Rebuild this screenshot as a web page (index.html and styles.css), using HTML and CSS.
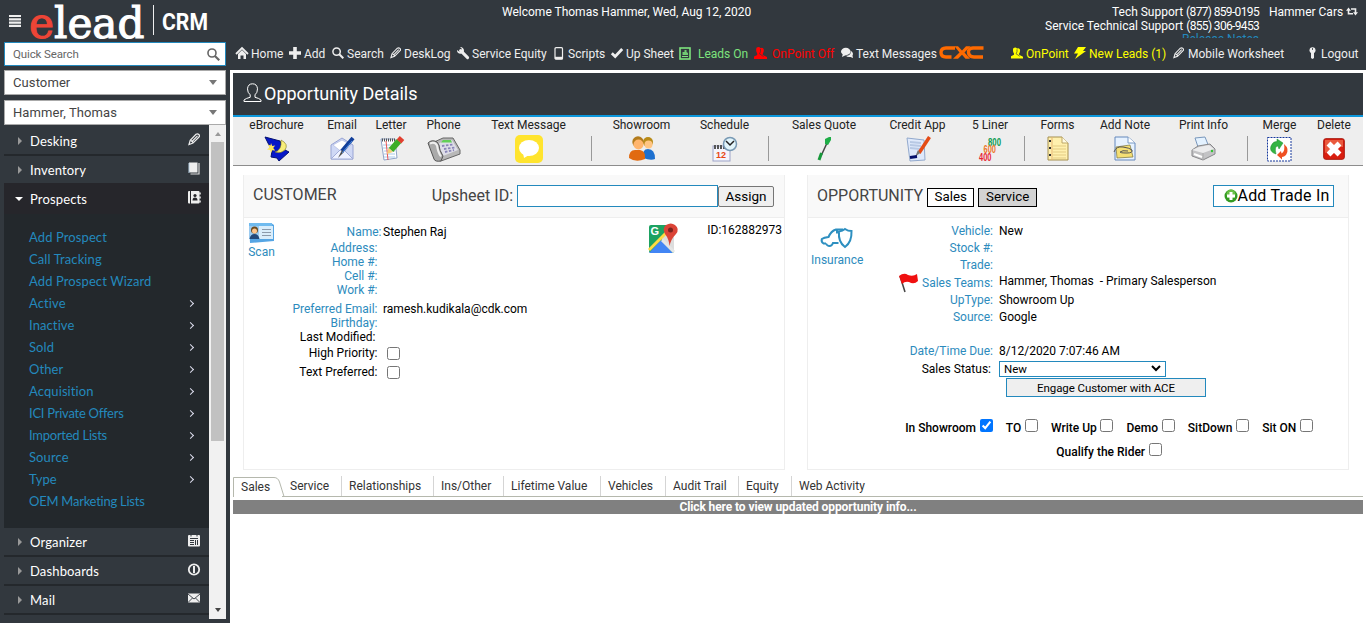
FILE: index.html
```html
<!DOCTYPE html>
<html lang="en">
<head>
<meta charset="utf-8">
<title>elead CRM</title>
<link rel="stylesheet" href="styles.css">
</head>
<body>
<svg class="defs" width="0" height="0">
  <symbol id="pencil" viewBox="0 0 12 12"><path d="M1 11l1.200-4.200L8 .8Q9.600-.2 10.800 1T11 3.500L5 9.600zM3 7l2.200 2M4 8L9.500 2.300" fill="none" stroke="currentColor" stroke-width="1.200"/></symbol>
  <symbol id="search" viewBox="0 0 12 12"><circle cx="4.600" cy="4.600" r="3.700" fill="none" stroke="currentColor" stroke-width="1.500"/><path d="M7.300 7.300l4 4" stroke="currentColor" stroke-width="2"/></symbol>
  <symbol id="users" viewBox="0 0 13 12"><path d="M2.500.8Q5-.8 6.500 1.200Q9 0 9.800 2.500Q10 5 8.800 6.500V8l4.200 2v2H0V9.500l3.200-1.600V6.500Q1.500 4 2.500.8z" fill="currentColor"/><path d="M6.500 2Q7 5 5.500 6.800L9.500 9.500" fill="none" stroke="#32383e" stroke-width=".7"/></symbol>
</svg>

<aside class="sidebar">
  <div class="brand">
    <svg width="222" height="42" viewBox="0 0 222 42">
      <path d="M5 16h12M5 19.300h12M5 22.600h12M5 25.900h12" stroke="#eee" stroke-width="2.200"/>
      <text class="logo" x="25" y="37.500" textLength="115.500" lengthAdjust="spacingAndGlyphs"><tspan class="logo-e">e</tspan>lead</text>
      <path d="M149.500 5v30" stroke="#eee"/>
      <text class="crm" x="158" y="30" textLength="46" lengthAdjust="spacingAndGlyphs">CRM</text>
    </svg>
  </div>
  <div class="field quick"><span>Quick Search</span><svg width="13" height="13"><use href="#search"/></svg></div>
  <div class="field"><span>Customer</span><i class="caret"></i></div>
  <div class="field"><span>Hammer, Thomas</span><i class="caret"></i></div>
  <div class="menu-wrap">
    <nav class="menu">
      <div class="item"><i class="tri"></i><span>Desking</span><svg width="12" height="13"><use href="#pencil"/></svg></div>
      <div class="item last-closed"><i class="tri"></i><span>Inventory</span><svg width="12" height="13"><path d="M1 .5h8.500v10H2.500q-1.500 0-1.500-1.500z" fill="#eee"/><path d="M11 1v11H2.500" fill="none" stroke="#ddd" stroke-width="1.200"/><path d="M1 1v10" stroke="#b9d2e5"/></svg></div>
      <div class="item open"><i class="tri"></i><span>Prospects</span><svg width="12" height="13"><rect width="11.500" height="12.500" rx="1" fill="#eee"/><path d="M2.500 0v13" stroke="#26262b"/><circle cx="7" cy="4.500" r="1.600" fill="#26262b"/><path d="M4.500 9.500q0-3 2.500-3t2.500 3z" fill="#26262b"/><path d="M12 1.500v2M12 5.500v2M12 9.500v2" stroke="#eee" stroke-width="1.500"/></svg></div>
      <ul class="sub">
        <li>Add Prospect</li><li>Call Tracking</li><li>Add Prospect Wizard</li>
        <li class="more">Active</li><li class="more">Inactive</li><li class="more">Sold</li><li class="more">Other</li><li class="more">Acquisition</li><li class="more tight">ICI Private Offers</li><li class="more tight">Imported Lists</li><li class="more">Source</li><li class="more">Type</li><li class="tight">OEM Marketing Lists</li>
      </ul>
      <div class="item"><i class="tri"></i><span>Organizer</span><svg width="12" height="13"><rect y="1" width="12" height="11.500" rx="1" fill="#eee"/><path d="M3 0v2.500M9 0v2.500M2 4.500h8" stroke="#32383e"/><path d="M2 6.500h4M2 8.500h4M2 10.500h4M7.500 6v5M9.500 6v5" stroke="#32383e"/></svg></div>
      <div class="item"><i class="tri"></i><span>Dashboards</span><svg width="12" height="13"><circle cx="6" cy="6.500" r="5.200" fill="none" stroke="#eee" stroke-width="1.800"/><path d="M6 3v7" stroke="#eee" stroke-width="2"/></svg></div>
      <div class="item"><i class="tri"></i><span>Mail</span><svg width="12" height="13"><rect y="1.500" width="12" height="9" fill="#eee"/><path d="M0 2l6 5 6-5M0 10.500l4.500-4.500M12 10.500L7.500 6" fill="none" stroke="#32383e" stroke-width=".9"/></svg></div>
    </nav>
    <div class="scroll"><i class="up"></i><div class="thumb"></div><i class="down"></i></div>
  </div>
</aside>

<main class="main">
  <header class="top">
    <div class="info">
      <div class="welcome">Welcome Thomas Hammer, Wed, Aug 12, 2020</div>
      <div class="support"><div>Tech Support <span>(877) 859-0195</span></div><div>Service Technical Support <span>(855) 306-9453</span></div><div class="notes">Release Notes</div></div>
      <div class="dealer">Hammer Cars <svg width="12" height="9"><path d="M2.500 3v3.800h4.500M9.500 6V2H5" fill="none" stroke="#eee" stroke-width="1.600"/><path d="M0 3.800L2.500.5 5 3.800zM7 5.200h5L9.500 8.500z" fill="#eee"/></svg></div>
    </div>
    <nav class="nav">
      <a><svg width="12" height="12"><path d="M0 7l6-6 6 6" fill="none" stroke="#eee" stroke-width="1.800"/><path d="M2 7l4-4 4 4v5H7.500V8.500h-3V12H2z" fill="#eee"/></svg>Home</a>
      <a><svg width="12" height="12"><path d="M6 0v12M0 6h12" stroke="#eee" stroke-width="3.600"/></svg>Add</a>
      <a><svg width="12" height="12"><use href="#search"/></svg>Search</a>
      <a><svg width="11" height="12"><use href="#pencil"/></svg>DeskLog</a>
      <a><svg width="12" height="12"><path d="M3.600 3.600l7 7" stroke="#eee" stroke-width="3" stroke-linecap="round"/><path d="M3 0l2 2-2.500 2.800L0 3Q0 7 4 6.800L7 4.500Q7.200 0 3 0z" fill="#eee"/></svg>Service Equity</a>
      <a><svg width="10" height="13"><rect x="1" y=".7" width="7.500" height="11.500" rx="1" fill="none" stroke="#eee" stroke-width="1.200"/><path d="M1 11h7.500" stroke="#eee" stroke-width="2.400"/></svg>Scripts</a>
      <a><svg width="12" height="12"><path d="M.8 6.200L4.200 9.500 11.200 2" fill="none" stroke="#eee" stroke-width="2.800"/></svg>Up Sheet</a>
      <a class="green"><svg width="12" height="13"><rect x="1" y="1" width="10" height="11" fill="none" stroke="currentColor" stroke-width="1.600"/><path d="M3 9.500h6" stroke="currentColor"/><path d="M3.500 8V5h2V3h2v2l1.500 1v2z" fill="currentColor" opacity=".85"/></svg>Leads On</a>
      <a class="red"><svg width="13" height="12"><use href="#users"/></svg>OnPoint Off</a>
      <a><svg width="12" height="12"><ellipse cx="4.800" cy="4.500" rx="4.800" ry="3.700" fill="#eee"/><path d="M2 6L1 10l4-2zM10 4q3 2 1.500 4.500l.5 2.500-2.500-1Q6 10.500 5 8.800 10 8.500 10 4z" fill="#eee"/></svg>Text Messages</a>
      <a><svg class="cxc" width="45" height="13"><path d="M16 2H7Q2 2 2 6.500T7 11H12.500" fill="none" stroke="#ff6a00" stroke-width="3.400"/><path d="M15.500 .3h3.500l4 4.200L27 .3h4.500L25.500 6.500l5.500 6.200h-4.500L23 8.800 19 12.700h-5L20.500 6.500z" fill="#ff6a00"/><path d="M44.500 2H34Q29 2.500 29.500 6.500 30 11 35 11H44" fill="none" stroke="#ff6a00" stroke-width="3.400"/></svg></a>
      <a class="yellow"><svg width="12" height="12"><use href="#users"/></svg>OnPoint</a>
      <a class="yellow"><svg width="12" height="12"><path d="M4 0h8L9 4H12L1 12l3-5.500H0z" fill="currentColor"/></svg>New Leads (1)</a>
      <a><svg width="11" height="12"><use href="#pencil"/></svg>Mobile Worksheet</a>
      <a><svg width="7" height="12"><circle cx="3.500" cy="3.200" r="3" fill="#eee"/><path d="M2 5h3v6l-1.500 1L2 11z" fill="#eee"/><path d="M3.500 1v2" stroke="#32383e" stroke-width=".8"/></svg>Logout</a>
    </nav>
  </header>

  <section class="page">
    <h1 class="title"><svg width="19" height="20"><path d="M1 18.500h17v-1.500q-2-1.800-6-2.700v-2.500q2.500-2 2.500-6Q14 .8 9.500.8T4.500 5.800q0 4 2.700 6v2.500Q3 15.200 1 17z" fill="none" stroke="#fff"/></svg>Opportunity Details</h1>
    <div class="tools">
      <div class="tool"><span>eBrochure</span><svg width="26" height="27"><path d="M1 1L16 5l3 8 6 3-10 9-2-3-6-1 1-6z" fill="#0718c8" stroke="#031070"/><path d="M17 4q8 4 4 10-4 4-10 2 7-2 6-12z" fill="#f8ee7a" stroke="#7a7420" stroke-width=".6"/><path d="M7 7l1.200 3 3-.5-2 2.500 2 2.500-3-.3L7 17l-1-3-3-.5 2.500-2L4 8.500l2.500 1z" fill="#ffe95c"/></svg></div>
      <div class="tool"><span>Email</span><svg width="26" height="27"><path d="M2 9L13 2l11 7v14H2z" fill="#cfd8f5" stroke="#98a4d4"/><path d="M4 9l9-5 9 5-8 8z" fill="#fff" stroke="#aab4dc" stroke-width=".6"/><path d="M2 23l9-9h4l9 9z" fill="#eef1ff" stroke="#a1acd8"/><path d="M24 2L13 15" stroke="#123f9a" stroke-width="4"/><path d="M13 14L9 22l6-6z" fill="#4b4b4b"/><path d="M23 5L13 17" stroke="#4b8ae3"/></svg></div>
      <div class="tool"><span>Letter</span><svg width="26" height="27"><path d="M3 3h14l2 19-13 2z" fill="#fff" stroke="#8fa4c8"/><path d="M4 4h13" stroke="#555" stroke-width="3" stroke-dasharray="1 1"/><path d="M5 9h12M5 12h12M6 15h11M6 18h11M6 21h11" stroke="#a9c8e8"/><path d="M8 5l2 19" stroke="#e55"/><path d="M21 5L13 14" stroke="#3cae27" stroke-width="6"/><path d="M24 2l-3 3.500" stroke="#e14030" stroke-width="6"/><path d="M10.500 12l-1.500 6 6-2z" fill="#f6cf7b"/></svg></div>
      <div class="tool"><span>Phone</span><svg width="34" height="27"><path d="M5 7L16 2h10l7 12v4L14 25 8 23z" fill="#b8b8b8" stroke="#666"/><path d="M11 8l7-4h7l6 10-15 6z" fill="#dedee8"/><path d="M16 4h8l1 2.500h-11z" fill="#62cf57"/><path d="M1 7q4-4 9-1l2 3q0 5 4 11l-2 5q-6 1-7-2z" fill="#aaa" stroke="#555"/><path d="M3 7.500q5-2 7 2 1 7 4 11" fill="none" stroke="#eee" stroke-width="2"/><path d="M15 10l11-1.500M17 13l11-1.500M18 16l9-2" stroke="#8a86b8" stroke-width="1.800" stroke-dasharray="2.500 1.500"/></svg></div>
      <div class="tool"><span>Text Message</span><svg width="28" height="28"><rect width="28" height="28" rx="5" fill="#ffe42e"/><ellipse cx="14" cy="13" rx="10" ry="8" fill="#fff"/><path d="M8 18l1 5 5-3z" fill="#fff"/></svg></div>
      <i class="sep"></i>
      <div class="tool"><span>Showroom</span><svg width="26" height="26"><circle cx="19" cy="6" r="5" fill="#b98b18"/><circle cx="19.500" cy="8.500" r="4" fill="#ffc583"/><path d="M14 22q-1-9 5-9 7 0 7 10-4 2-12-1z" fill="#1e70cf"/><circle cx="9" cy="6" r="5.700" fill="#b27b1c"/><circle cx="9.500" cy="8.500" r="5" fill="#ffb56d"/><path d="M0 22q0-8 6-8h5q6 1 5 9-9 4-16-1z" fill="#e16a10"/></svg></div>
      <div class="tool"><span>Schedule</span><svg width="26" height="27"><rect x="1" y="10" width="17" height="15" fill="#f4f4fc" stroke="#9da4c8"/><path d="M2 11h13" stroke="#555" stroke-width="4" stroke-dasharray="2 1"/><text class="cal" x="4" y="22">12</text><circle cx="18" cy="8" r="6.500" fill="#e2f5fb" stroke="#7899b4" stroke-width="1.500"/><path d="M14 5l4 4 4-4" fill="none" stroke="#222" stroke-width="1.500"/></svg></div>
      <i class="sep"></i>
      <div class="tool"><span>Sales Quote</span><svg width="15" height="26"><path d="M10 7L4 20" stroke="#444" stroke-width="1.500"/><path d="M4.500 17L2 24" stroke="#16983a" stroke-width="3"/><path d="M8 3l4-2h2v3l-3 5-3-1z" fill="#1fae48"/></svg></div>
      <div class="tool"><span>Credit App</span><svg width="26" height="26"><path d="M2 2l17 2 1 20-15 1z" fill="#dfe9fb" stroke="#92a9cd"/><path d="M5 6l11 1M5 9l11 1M5 12l10 1" stroke="#b7c8e4" stroke-width="2"/><path d="M24.500 1L14 17" stroke="#e44b16" stroke-width="3.500"/><path d="M13 14l-3 7 5-4z" fill="#777"/><path d="M5 21.500l7-1" stroke="#06106c" stroke-width="3"/></svg></div>
      <div class="tool"><span>5 Liner</span><svg width="24" height="26"><g class="score"><text x="10" y="9.500" fill="#0b9a50" textLength="13" lengthAdjust="spacingAndGlyphs">800</text><text x="5.500" y="17" fill="#ed7828" textLength="12.500" lengthAdjust="spacingAndGlyphs">600</text><text x="1" y="24.500" fill="#e81f34" textLength="12.500" lengthAdjust="spacingAndGlyphs">400</text></g></svg></div>
      <i class="sep"></i>
      <div class="tool"><span>Forms</span><svg width="22" height="26"><path d="M1 1h14l6 6v17H1z" fill="#fff0ae" stroke="#a58f4f"/><path d="M15 1v6h6" fill="#fffbe4" stroke="#bda667"/><path d="M6 10h13M6 13h13M6 16h13M6 19h13M6 22h13" stroke="#e3cb82"/><path d="M5 1v23" stroke="#e6b573"/><path d="M3 4v2M3 11v2M3 18v2" stroke="#333" stroke-width="2"/></svg></div>
      <div class="tool"><span>Add Note</span><svg width="22" height="26"><path d="M1 1h13l7 6v17H1z" fill="#e7f2ff" stroke="#6488bc"/><path d="M14 1v6h7" fill="#fff" stroke="#7899c4"/><path d="M2 11l14-2 3 12-16 1z" fill="#f5df74" stroke="#77713b" stroke-width=".7"/><path d="M0 16q2-6 9-5t9 3q1 3-5 3-7 0-7-1 2-2 8-1" fill="none" stroke="#555"/></svg></div>
      <div class="tool"><span>Print Info</span><svg width="25" height="26"><path d="M4 2l10-1 4 10-10 3z" fill="#e4f2ff" stroke="#7997bc"/><path d="M1 14l6-4 12-2 5 5v5L12 24 1 20z" fill="#c3c3c5" stroke="#88888b"/><path d="M1 14l7-3 10-2 5 4-11 4z" fill="#ececed"/><path d="M12 17v7" stroke="#aaa"/><path d="M3 18l8 3" stroke="#fff" stroke-width="2"/><circle cx="21" cy="15" r="1.200" fill="#32c532"/></svg></div>
      <i class="sep"></i>
      <div class="tool"><span>Merge</span><svg width="25" height="25"><rect x=".5" y=".5" width="23.500" height="23.500" fill="#fff" stroke="#16389c" stroke-dasharray="2 1"/><path d="M9 17Q2 15 4 9 6 4 10 4.500L10 2l6 4-4 6-1-3Q7 9 9 17z" fill="#34b443" stroke="#1e8a2c" stroke-width=".5"/><path d="M17 7q6 5 2 11-2 2-4 2v2.500l-5-4.500 4-4 .5 2.500q4-2 2.500-9.500z" fill="#ef5022"/></svg></div>
      <div class="tool"><span>Delete</span><svg width="22" height="22"><rect x=".7" y=".7" width="20.600" height="20.600" rx="2" fill="#d91e10" stroke="#a8150b"/><path d="M2 2h18v7Q10 8 2 15z" fill="#ea5a3e"/><path d="M5.500 5.500l11 11M16.500 5.500l-11 11" stroke="#fff" stroke-width="5.500"/></svg></div>
    </div>

    <div class="panels">
      <section class="panel customer">
        <header><h2>CUSTOMER</h2><label>Upsheet ID:</label><input type="text"><button class="assign">Assign</button></header>
        <div class="body">
          <div class="side"><svg width="27" height="22"><path d="M1 1h22l3 2v16l-24 2z" fill="#55a5e4"/><path d="M1 4h24v13H1z" fill="#d9edfb"/><path d="M1 1h23v3H1z" fill="#70bbef"/><path d="M1 4h10v13H1z" fill="#9ccbf0"/><circle cx="6.500" cy="8" r="3.500" fill="#6c4b1e"/><circle cx="6.500" cy="9" r="2.500" fill="#ffc48a"/><path d="M1.500 17q1-5 5-5t5 5z" fill="#234879"/><path d="M14 7.500h9M14 10.500h9M14 13.500h9" stroke="#8b9aab"/></svg><span>Scan</span></div>
          <dl class="rows">
            <dt class="name">Name:</dt><dd>Stephen Raj</dd>
            <dt>Address:</dt><dd></dd>
            <dt>Home #:</dt><dd></dd>
            <dt>Cell #:</dt><dd></dd>
            <dt>Work #:</dt><dd></dd>
            <dt class="first">Preferred Email:</dt><dd class="first">ramesh.kudikala@cdk.com</dd>
            <dt>Birthday:</dt><dd></dd>
            <dt class="plain nudge">Last Modified:</dt><dd></dd>
            <dt class="plain lift">High Priority:</dt><dd><input type="checkbox"></dd>
            <dt class="plain lift">Text Preferred:</dt><dd><input type="checkbox"></dd>
          </dl>
          <svg class="map" width="32" height="31"><rect x="1" y="2" width="25" height="28" rx="2" fill="#1da261"/><path d="M1 28L22 7l4 4v17L12 15 2 26z" fill="#ddd"/><path d="M1 30l12-13 12 13z" fill="#4285f4"/><path d="M1 27L19 9" stroke="#ffda44" stroke-width="3"/><path d="M14 17l12 12" stroke="#e5e5e5" stroke-width="3"/><path d="M21.500 23Q21 16 17 11q-3-6 1-9 5-3 9 0 5 4 1 9-5 5-6.500 12z" fill="#db4437"/><circle cx="22.500" cy="7" r="2.500" fill="#7b231e"/><text class="g" x="2.500" y="12">G</text></svg>
          <div class="id">ID:162882973</div>
        </div>
      </section>

      <section class="panel opp">
        <header><h2>OPPORTUNITY</h2><button class="square">Sales</button><button class="square active">Service</button><button class="trade"><svg width="14" height="14"><circle cx="7" cy="7" r="6.500" fill="#339b22"/><circle cx="7" cy="5" r="4.500" fill="#68bf45"/><path d="M7 3v8M3 7h8" stroke="#fff" stroke-width="3"/></svg>Add Trade In</button></header>
        <div class="body">
          <div class="side"><svg width="34" height="22"><path d="M6 16.500H3.500Q1 15 1.800 12 4 10.500 8.500 10 11 4 16 2.500H23M6 16.500q1 2.500 3.500 2.500t3.500-3h5.500M17 2.500v4" fill="none" stroke="#2d8fc0" stroke-width="2"/><path d="M25 2Q28 4 31.500 4 32 15 25 20 18 15 19 4.500 22.500 4 25 2z" fill="#fff" stroke="#2d8fc0" stroke-width="2"/></svg><span>Insurance</span></div>
          <dl class="rows">
            <dt>Vehicle:</dt><dd>New</dd>
            <dt>Stock #:</dt><dd></dd>
            <dt>Trade:</dt><dd></dd>
            <dt class="team"><svg class="flag" width="21" height="20"><path d="M2 3l5 16" stroke="#444" stroke-width="1.500"/><path d="M1 3q5-4 9-1 5 2 9-1l1 7q-4 4-9 1-4-1-7 2z" fill="#f01010"/></svg>Sales Teams:</dt><dd class="raise">Hammer, Thomas&nbsp; - Primary Salesperson</dd>
            <dt>UpType:</dt><dd>Showroom Up</dd>
            <dt>Source:</dt><dd>Google</dd>
            <dt class="due">Date/Time Due:</dt><dd class="due">8/12/2020 7:07:46 AM</dd>
            <dt class="plain nudge">Sales Status:</dt><dd><div class="select"><span>New</span><svg width="10" height="7"><path d="M1 1l4 4 4-4" fill="none" stroke="#000" stroke-width="2"/></svg></div></dd>
          </dl>
          <button class="engage">Engage Customer with ACE</button>
          <div class="checks">
            <label>In Showroom<input type="checkbox" checked></label><label>TO<input type="checkbox"></label><label>Write Up<input type="checkbox"></label><label>Demo<input type="checkbox"></label><label>SitDown<input type="checkbox"></label><label>Sit ON<input type="checkbox"></label><label>Qualify the Rider<input type="checkbox"></label>
          </div>
        </div>
      </section>
    </div>

    <nav class="tabs">
      <a class="current"><svg width="53" height="21"><path d="M.5 21V1.500H41Q45 1.500 46.500 6L51 20.500h2" fill="none" stroke="#b5b8ad"/></svg><span>Sales</span></a><a>Service</a><a>Relationships</a><a>Ins/Other</a><a>Lifetime Value</a><a>Vehicles</a><a>Audit Trail</a><a>Equity</a><a>Web Activity</a>
    </nav>
    <div class="notice">Click here to view updated opportunity info...</div>
  </section>
</main>
</body>
</html>
```
FILE: styles.css
```css
* { box-sizing: border-box; }
body { margin: 0; width: 1366px; height: 623px; overflow: hidden; display: flex; background: #32383e; font: 12px/14px Roboto, "Liberation Sans", sans-serif; color: #000; }
svg { flex: none; display: block; overflow: visible; }
.defs { position: absolute; }
h1, h2, dl, dd, ul { margin: 0; padding: 0; font-weight: 400; }
button, input { font-family: Roboto, "Liberation Sans", sans-serif; margin: 0; }

/* sidebar */
.sidebar { width: 230px; padding: 0 4px; flex: none; color: #eee; }
.brand { height: 42px; }
.logo { font: 42.500px "DejaVu Serif", serif; fill: #fff; stroke: #fff; stroke-width: 1.100px; }
.logo-e { fill: #ee4536; stroke: #ee4536; }
.crm { font: 700 23px Roboto, sans-serif; fill: #fff; }
.field { width: 222px; height: 25px; margin-bottom: 5px; padding: 0 8px; display: flex; align-items: center; justify-content: space-between; background: #fff; border: 1px solid #aaa; color: #444; font-size: 13px; letter-spacing: .1px; }
.quick { height: 24px; margin-bottom: 4px; border-color: #2389bd; color: #666; font-size: 11.500px; letter-spacing: -.12px; padding-right: 5px; }
.field:nth-of-type(4) { margin-bottom: 0; }
.caret { border: 4px solid transparent; border-top: 5px solid #777; border-bottom: 0; }
.menu-wrap { display: flex; height: 494px; }
.menu { width: 205px; padding-top: 2px; overflow: hidden; font-family: Lato, sans-serif; }
.item { height: 29px; border-bottom: 2px solid #24282c; padding: 0 9px 0 14px; display: flex; align-items: center; font-size: 13px; color: #fff; }
.item span { flex: 1; padding-left: 8px; letter-spacing: .15px; }
.item svg { color: #eee; margin-bottom: 3px; }
.tri { width: 4px; border: 4px solid transparent; border-left: 4px solid #999; border-right: 0; }
.open, .last-closed { border-color: #26262b; }
.open { background: #26262b; }
.open .tri { width: 8px; margin-left: -3px; margin-right: -1px; border: 4px solid transparent; border-top-color: #fff; border-bottom: 0; }
.sub { height: 314px; padding: 12px 14px 0 25px; background: #23282c; list-style: none; color: #2389bd; font-size: 13px; letter-spacing: .1px; }
.sub li { height: 22px; line-height: 22px; display: flex; align-items: center; justify-content: space-between; }
.sub .tight { letter-spacing: -.25px; }
.more::after { content: ""; width: 5px; height: 5px; box-sizing: border-box; margin-right: 2px; border: solid #dde; border-width: 1.500px 1.500px 0 0; transform: rotate(45deg); }
.scroll { width: 17px; height: 494px; background: #f1f1f1; display: flex; flex-direction: column; align-items: center; }
.up { margin: 7px 0 6px; border: 3.500px solid transparent; border-bottom: 4px solid #999; border-top: 0; }
.thumb { width: 13px; height: 299px; background: #c1c1c1; }
.down { margin-top: auto; margin-bottom: 7px; border: 3.500px solid transparent; border-top: 4px solid #444; border-bottom: 0; }

/* top bar */
.main { width: 1136px; }
.top { height: 70px; color: #fff; }
.info { height: 38px; overflow: hidden; padding-top: 5px; display: flex; white-space: nowrap; }
.welcome { margin-left: 272px; width: 543px; }
.support { width: 214px; text-align: right; }
.support span { letter-spacing: -.65px; }
.notes { color: #2389bd; margin-top: -1px; }
.dealer { display: flex; margin-left: 10px; gap: 3px; }
.dealer svg { margin-top: 2px; }
.nav { height: 32px; padding-left: 6px; display: flex; align-items: center; white-space: nowrap; color: #eee; }
.nav a { display: flex; align-items: center; gap: 3px; flex: none; }
.nav svg { margin-bottom: 2px; }
.nav a:nth-child(1) { width: 53px; }
.nav a:nth-child(2) { width: 43px; }
.nav a:nth-child(3) { width: 58px; }
.nav a:nth-child(4) { width: 67px; }
.nav a:nth-child(5) { width: 97px; }
.nav a:nth-child(6) { width: 57px; gap: 4px; }
.nav a:nth-child(7) { width: 68px; }
.nav a:nth-child(8) { width: 75px; gap: 7px; }
.nav a:nth-child(9) { width: 87px; gap: 5px; }
.nav a:nth-child(10) { width: 98px; }
.nav a:nth-child(11) { width: 72px; }
.nav a:nth-child(12) { width: 63px; }
.nav a:nth-child(13) { width: 99px; }
.nav a:nth-child(14) { width: 136px; gap: 4px; }
.nav a:nth-child(15) { gap: 5px; }
.nav .cxc { margin-bottom: 4px; }
.green { color: #7de37d; }
.nav .red { color: #f00; }
.yellow { color: #ff0; }

/* page */
.page { height: 553px; padding: 3px 3px 0; background: #fff; }
.title { height: 42px; background: #32383e; color: #fff; display: flex; align-items: center; gap: 2px; padding-left: 10px; font-size: 18px; }
.title svg { margin-top: -3px; }
.tools { height: 51px; border-top: 2px solid #0b97dc; border-bottom: 1px solid #8c8c8c; background: #eee; display: flex; white-space: nowrap; color: #222; }
.tool { flex: none; display: flex; flex-direction: column; align-items: center; }
.tool span { height: 16px; padding-top: 1px; }
.tool svg { margin: auto 0; }
.sep { flex: none; width: 1px; height: 25px; margin-top: 19px; background: #999; }
.tools > :nth-child(1) { width: 55px; margin-left: 16px; }
.tools > :nth-child(2) { width: 30px; margin-left: 23px; }
.tools > :nth-child(3) { width: 32px; margin-left: 18px; }
.tools > :nth-child(4) { width: 35px; margin-left: 19px; }
.tools > :nth-child(5) { width: 75px; margin-left: 30px; }
.tools > :nth-child(6) { margin-left: 25px; }
.tools > :nth-child(7) { width: 57px; margin-left: 21px; }
.tools > :nth-child(8) { width: 49px; margin-left: 30px; }
.tools > :nth-child(9) { margin-left: 19px; }
.tools > :nth-child(10) { width: 64px; margin-left: 23px; }
.tools > :nth-child(11) { width: 57px; margin-left: 33px; }
.tools > :nth-child(12) { width: 36px; margin-left: 26px; }
.tools > :nth-child(13) { margin-left: 16px; }
.tools > :nth-child(14) { width: 35px; margin-left: 15px; }
.tools > :nth-child(15) { width: 50px; margin-left: 25px; }
.tools > :nth-child(16) { width: 49px; margin-left: 29px; }
.tools > :nth-child(17) { margin-left: 19px; }
.tools > :nth-child(18) { width: 33px; margin-left: 15px; }
.tools > :nth-child(19) { width: 34px; margin-left: 21px; }
.cal { font: 700 9px "Liberation Sans", sans-serif; fill: #e84715; }
.score { font: 700 11px/1 "Liberation Sans", sans-serif; }
.panels { display: flex; gap: 22px; padding: 9px 10px 0; }
.panel { width: 542px; height: 295px; border: 1px solid #eee; border-top: 0; }
.panel header { height: 43px; border-bottom: 1px solid #eee; background: #f9f9f9; display: flex; align-items: center; padding-left: 9px; color: #444; }
.panel h2 { font-size: 16px; letter-spacing: 0; padding-bottom: 3px; }
.opp h2 { padding-bottom: 1px; }
.panel label { white-space: nowrap; }
.customer header label { margin-left: auto; font-size: 16px; padding-right: 4px; }
.customer header input { width: 201px; height: 22px; border: 1px solid #2389bd; }
.assign { width: 56px; height: 21px; margin: 1px 10px 0 0; padding: 0 0 1px; border: 1px solid #767676; border-radius: 2px; background: #efefef; font-size: 13.500px; }
.square { height: 19px; padding: 0 0 1px; width: 47px; margin-left: 4px; margin-top: 2px; border: 1px solid #000; background: #fff; font-size: 13.300px; color: #000; }
.square.active { width: 59px; background: #d3d3d3; }
.trade { margin-left: auto; margin-right: 14px; width: 121px; height: 22px; border: 1px solid #2389bd; background: #fff; display: flex; align-items: center; justify-content: center; font-size: 16px; letter-spacing: .2px; padding: 0 0 2px 6px; white-space: nowrap; }
.trade svg { margin-top: 2px; }
.body { position: relative; height: 250px; }
.side { position: absolute; left: 3px; top: 4px; color: #2d8bbd; display: flex; flex-direction: column; align-items: center; }
.side span { padding-top: 1px; }
.customer .side { left: 4px; }
.opp .side { top: 9px; left: 3px; }
.opp .side span { padding-top: 4px; }
.rows { display: grid; align-items: center; column-gap: 6px; padding-top: 6px; white-space: nowrap; }
.rows dt { text-align: right; color: #2d8bbd; }
.rows .name { margin-right: -4px; }
.rows .plain { color: #000; }
.rows .nudge { padding-right: 2px; }
.rows .lift { padding-bottom: 2px; }
.rows dd { display: flex; align-items: center; }
.customer .rows { grid-template-columns: 133.500px 1fr; column-gap: 5.500px; grid-template-rows: 16px 15px 14px 14px 14px 19px 14px 14px 19px 19px; }
.customer .first { padding-top: 5px; }
.opp .rows { grid-template-columns: 185px 1fr; grid-template-rows: 17px 17px 17px 18px 17px 17px 34px 19px; padding-top: 4px; }
.opp .due { padding-top: 18px; }
.raise { padding-bottom: 3px; }
.team { display: flex; justify-content: flex-end; align-items: center; height: 18px; padding-top: 2px; }
.flag { margin-right: 3px; }
input[type="checkbox"] { width: 13px; height: 13px; margin: 0 0 0 4px; }
.map { position: absolute; left: 404px; top: 5px; }
.g { font: 700 11px "Liberation Sans", sans-serif; fill: #fff; }
.id { position: absolute; right: 2px; top: 5px; }
.select { width: 167px; height: 16px; border: 1px solid #2389bd; display: flex; align-items: center; justify-content: space-between; padding: 0 4px; font-size: 11.500px; }
.engage { display: block; width: 200px; height: 19px; margin: 0 0 0 198px; padding: 0; border: 1px solid #2389bd; background: #efefef; font-size: 11.500px; letter-spacing: -.08px; color: #000; }
.checks { margin: 22px 0 0 94px; width: 414px; display: flex; flex-wrap: wrap; justify-content: center; column-gap: 13.200px; row-gap: 8px; font-size: 12px; font-weight: 500; }
.checks label { display: flex; height: 16px; align-items: flex-end; }
.checks input[type="checkbox"] { margin: 0 0 3px 3.600px; }

/* tabs */
.tabs { height: 21px; margin-top: 6px; display: flex; border-bottom: 1px solid #b5b8ad; white-space: nowrap; color: #333; }
.tabs a { border-right: 1px solid #d5d5d5; padding: 3px 0 0 7px; height: 20px; }
.tabs a:nth-child(2) { width: 60px; padding-left: 8px; }
.tabs a:nth-child(3) { width: 92px; }
.tabs a:nth-child(4) { width: 70px; }
.tabs a:nth-child(5) { width: 97px; }
.tabs a:nth-child(6) { width: 65px; }
.tabs a:nth-child(7) { width: 73px; }
.tabs a:nth-child(8) { width: 53px; }
.tabs a:nth-child(9) { border: 0; }
.tabs .current { position: relative; width: 49px; height: 21px; padding: 0; border: 0; background: #fff; }
.current span { position: absolute; left: 8px; top: 4px; }
.notice { height: 14px; margin-top: 3px; background: #808080; color: #fff; font-weight: 700; text-align: center; line-height: 14px; letter-spacing: -.1px; }
```
